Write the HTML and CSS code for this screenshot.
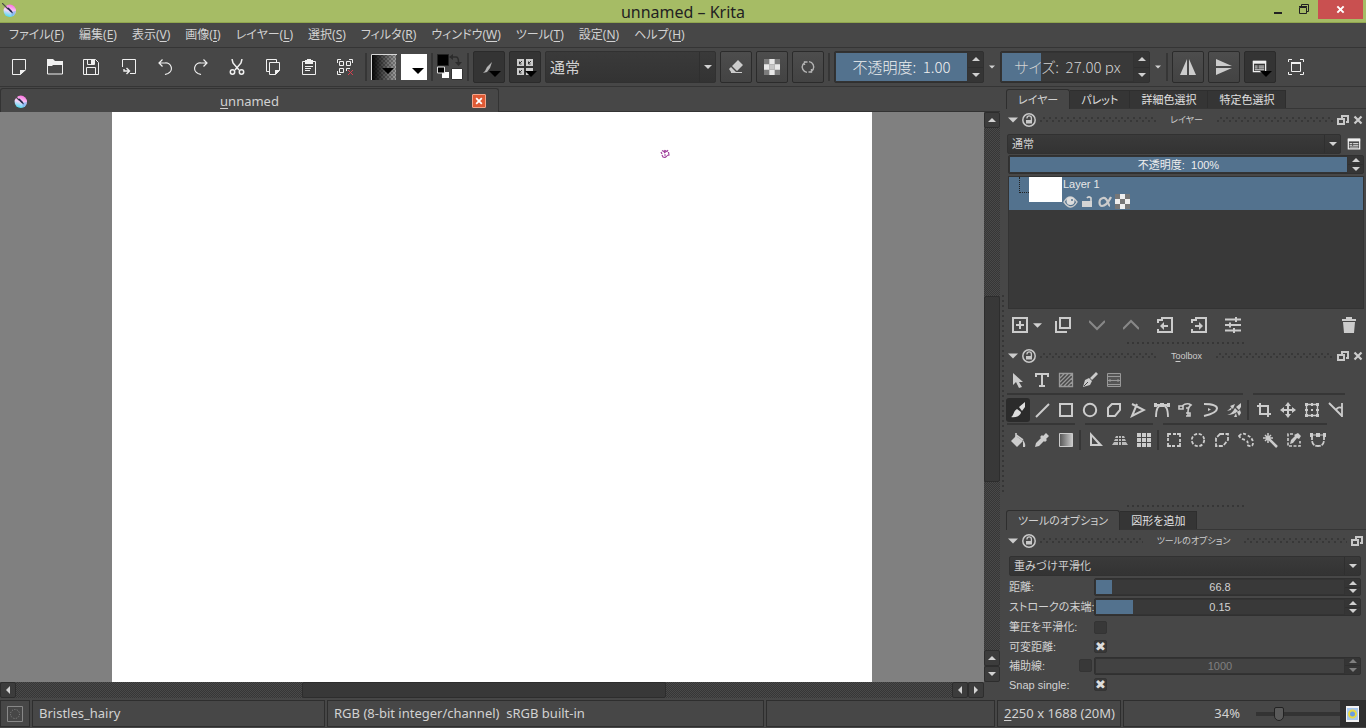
FILE: index.html
```html
<!DOCTYPE html>
<html lang="ja">
<head>
<meta charset="utf-8">
<title>unnamed – Krita</title>
<link rel="stylesheet" href="styles.css">
</head>
<body>
<svg class="defs" aria-hidden="true">
  <defs>
    <linearGradient id="kg" x1="0.6" y1="0" x2="0.3" y2="1"><stop offset="0" stop-color="#ff70e0"/><stop offset="0.5" stop-color="#f4d8fa"/><stop offset="1" stop-color="#40dcf0"/></linearGradient>
    <linearGradient id="gg"><stop offset="0" stop-color="#555"/><stop offset="1" stop-color="#ccc"/></linearGradient>
    <symbol id="krita" viewBox="0 0 14 14"><circle cx="7.800" cy="7.800" r="6.200" fill="url(#kg)"/><path d="M13.800 8a6 6 0 0 1-4 5.500L9 9z" fill="#6aa8f0" opacity=".6"/><path d="M0 0l6 6" stroke="#4a4a4a" stroke-width="1.200"/><path d="M5 5.500l3.500 3.500 2.500 1.500-1-2.500-3.500-3.500z" fill="#222a4a"/></symbol>
    <symbol id="up" viewBox="0 0 8 8"><path d="M0 6l4-4 4 4z" fill="currentColor"/></symbol>
    <symbol id="down" viewBox="0 0 8 8"><path d="M0 2l4 4 4-4z" fill="currentColor"/></symbol>
    <symbol id="left" viewBox="0 0 8 8"><path d="M6 0L2 4l4 4z" fill="currentColor"/></symbol>
    <symbol id="right" viewBox="0 0 8 8"><path d="M2 0l4 4-4 4z" fill="currentColor"/></symbol>
    <symbol id="lock" viewBox="0 0 14 14"><g fill="none" stroke="#c8c8c8"><circle cx="7" cy="7" r="6.200" stroke-width="1.500"/><path d="M5 5.500V5a2.200 2.200 0 0 1 4.400 0v3" stroke-width="1.300"/></g><path d="M4 7h6v3.500H4z" fill="#c8c8c8"/></symbol>
    <symbol id="float" viewBox="0 0 12 12"><g fill="none" stroke="#c8c8c8" stroke-width="2"><path d="M5 4V2h6v6H9"/><rect x="1" y="5" width="6" height="5"/></g></symbol>
    <symbol id="cross" viewBox="0 0 10 10"><path d="M1.500 1.500l7 7m0-7l-7 7" stroke="currentColor" stroke-width="2.200" fill="none"/></symbol>
    <symbol id="form" viewBox="0 0 16 16"><path d="M1.500 2.500h13v11h-13z" fill="none" stroke="#f0f0f0" stroke-width="1.400"/><path d="M1 2h14v3H1z" fill="#f0f0f0"/><path d="M3 7.500h3m1 0h6M3 9.500h3m1 0h6M3 11.500h10" stroke="#f0f0f0"/></symbol>
    <symbol id="checker" viewBox="0 0 15 15"><path d="M0 0h15v15H0z" fill="#7c7c7c"/><path d="M5 0h5v5H5zM0 5h5v5H0zM10 5h5v5h-5zM5 10h5v5H5z" fill="#e8e8e8"/><path d="M5 5h5v5H5z" fill="#c6c6c6"/></symbol>
    <symbol id="checkers" viewBox="0 0 15 15"><path d="M0 0h15v15H0z" fill="#777"/><path d="M5 0h5v5H5zM0 5h5v5H0zM10 5h5v5h-5zM5 10h5v5H5z" fill="#eee"/></symbol>
  </defs>
</svg>

<header class="titlebar">
  <svg class="app-icon" width="14" height="14"><use href="#krita"/></svg>
  <h1 class="title">unnamed – Krita</h1>
  <div class="win-buttons">
    <button class="win" aria-label="最小化"><svg width="18" height="18"><path d="M4 11h8v2H4z" fill="#222"/></svg></button>
    <button class="win" aria-label="元に戻す"><svg width="18" height="18"><path d="M3.500 6.500h7v6h-7zM3 5.500h8M5.500 5V3.500h7v7H11" fill="none" stroke="#222"/></svg></button>
    <button class="win win-close" aria-label="閉じる"><svg width="9" height="9"><use href="#cross"/></svg></button>
  </div>
</header>

<nav class="menubar">
  <button>ファイル(<u>F</u>)</button><button>編集(<u>E</u>)</button><button>表示(<u>V</u>)</button><button>画像(<u>I</u>)</button><button>レイヤー(<u>L</u>)</button><button>選択(<u>S</u>)</button><button>フィルタ(<u>R</u>)</button><button>ウィンドウ(<u>W</u>)</button><button>ツール(<u>T</u>)</button><button>設定(<u>N</u>)</button><button>ヘルプ(<u>H</u>)</button>
</nav>

<div class="toolbar">
  <div class="file-tools">
    <button aria-label="新規"><svg width="16" height="16" viewBox="0 0 16 16"><path d="M1.500.500h13v10l-5 5h-8z" fill="none" stroke="#f0f0f0"/><path d="M9 16v-5h6z" fill="#f0f0f0"/></svg></button>
    <button aria-label="開く"><svg width="16" height="16" viewBox="0 0 16 16"><path d="M.500 1v14h15V3.500" fill="none" stroke="#f0f0f0"/><path d="M0 0h6l2 2h8v4H6L5 7H0z" fill="#f0f0f0"/></svg></button>
    <button aria-label="保存"><svg width="16" height="16" viewBox="0 0 16 16"><path d="M.500.500h12l3 3v12H.500zM3.500 15V8.500h9V15M4.500 1v4.500h7V1" fill="none" stroke="#f0f0f0"/><path d="M8 1h3v4H8z" fill="#f0f0f0"/></svg></button>
    <button class="second" aria-label="書き出し"><svg width="16" height="16" viewBox="0 0 16 16"><path d="M1.500 8V.500h13v14H9" fill="none" stroke="#f0f0f0"/><path d="M3 10v2h5M5.500 9l3 3-3 3" fill="none" stroke="#f0f0f0" stroke-width="1.400"/></svg></button>
    <button aria-label="元に戻す"><svg width="16" height="16" viewBox="0 0 16 16"><path d="M2 4h6a5.500 5.500 0 0 1 3 10.500L8 15.500M5.500.500L2 4l3.500 3.500" fill="none" stroke="#f0f0f0" stroke-width="1.200"/></svg></button>
    <button aria-label="やり直し"><svg width="16" height="16" viewBox="0 0 16 16"><path d="M14 4H8a5.500 5.500 0 0 0-3 10.500l3 1M10.500.500L14 4l-3.500 3.500" fill="none" stroke="#f0f0f0" stroke-width="1.200"/></svg></button>
    <button aria-label="切り取り"><svg width="16" height="16" viewBox="0 0 16 16"><g fill="none" stroke="#f0f0f0" stroke-width="1.500"><path d="M3 0l1 4 6 7M13 0l-1 4-6 7"/><circle cx="3.500" cy="13" r="2.200"/><circle cx="12.500" cy="13" r="2.200"/></g></svg></button>
    <button aria-label="コピー"><svg width="16" height="16" viewBox="0 0 16 16"><path d="M4 12.500H1.500V.500h10V3M4.500 3.500h10v8l-4 4h-6z" fill="none" stroke="#f0f0f0"/><path d="M10 16v-5h5z" fill="#f0f0f0"/></svg></button>
    <button aria-label="貼り付け"><svg width="16" height="16" viewBox="0 0 16 16"><path d="M1.500 2.500h13v13h-13zM4 7.500h8M4 9.500h6M4 11.500h5" fill="none" stroke="#f0f0f0"/><path d="M4 1h2V0h4v1h2v4H4z" fill="#f0f0f0"/></svg></button>
    <button aria-label="選択解除"><svg width="16" height="16" viewBox="0 0 16 16"><path d="M.500 4V.500H4M12 .500h3.500V4M.500 12v3.500H4M2.500 2.500h4v4h-4zM9.500 2.500h4v4h-4zM2.500 9.500h4v4h-4zM9.500 12V9.500H13" fill="none" stroke="#f0f0f0"/><path d="M11 11l5 5m0-5l-5 5" stroke="#d84050"/></svg></button>
  </div>
  <i class="sep"></i>
  <button class="swatch" aria-label="グラデーション"><svg width="26" height="26"><defs><linearGradient id="sw"><stop offset="0"/><stop offset="1" stop-opacity="0"/></linearGradient><pattern id="chk" width="4" height="4" patternUnits="userSpaceOnUse"><path d="M0 0h4v4H0z" fill="#777"/><path d="M0 0h2v2H0zM2 2h2v2H2z" fill="#a0a0a0"/></pattern></defs><path d="M0 0h25v26H0z" fill="url(#chk)"/><path d="M0 0h25v26H0z" fill="url(#sw)"/><path d="M.500 26V.500H26" fill="none" stroke="#d8d8d8"/><path d="M11 14h12l-6 6z"/></svg></button>
  <button class="swatch" aria-label="パターン"><svg width="26" height="26"><path d="M0 0h26v26H0z" fill="#fff"/><path d="M11 14h12l-6 6z"/></svg></button>
  <i class="sep"></i>
  <button class="swatch" aria-label="描画色と背景色"><svg width="26" height="26"><path d="M.500.500h11v11h-11z" stroke="#222"/><path d="M5 18h7v6H5z" fill="#fff"/><path d="M.500 13h7v6h-7z" stroke="#ddd"/><path d="M14.500 14.500h11v11h-11z" fill="#fff" stroke="#333"/><path d="M16 0l-4 3 4 3zM18 8h7l-3.500 4z" fill="#2c2c2c"/><path d="M15 3h4q2.500 0 2.500 5" fill="none" stroke="#2c2c2c" stroke-width="1.500"/></svg></button>
  <i class="sep"></i>
  <button class="tbtn sunk" aria-label="ブラシ設定"><svg width="32" height="32"><path d="M19 11l-5 5-2 4-2 2 4-1 3-4z" fill="#b4b4b4"/><path d="M16 20h12l-6 6z"/></svg></button>
  <button class="tbtn sunk" aria-label="ブラシプリセット"><svg width="32" height="32"><path d="M8 8h7v7H8zM17 8h7v7h-7zM8 17h7v7H8zM17 17h7v7h-7z" fill="#ccc"/><path d="M10.500 10.500v2.500h2M13 10l-2 2M19.500 10.500v2.500h2M22 10l-2 2M10.500 19.500V22h2M13 19l-2 2" stroke="#333" fill="none"/><path d="M16 20h12l-6 6z"/></svg></button>
  <div class="combo big"><select aria-label="合成モード"><option>通常</option></select><svg width="8" height="8"><use href="#down"/></svg></div>
  <button class="tbtn" aria-label="消しゴム"><svg width="16" height="16"><path d="M10 1l5 5-6 6-5-5zM3 8l5 5H3l-2-3z" fill="#ccc"/><path d="M3 13.500h11" stroke="#ccc"/></svg></button>
  <button class="tbtn" aria-label="アルファを保護"><svg width="16" height="16"><use href="#checker"/></svg></button>
  <button class="tbtn" aria-label="再読み込み"><svg width="16" height="16"><g fill="none" stroke="#b4b4b4" stroke-width="1.400"><path d="M9 2.600a5.500 5.500 0 0 1 4 8.200M7 13.400a5.500 5.500 0 0 1-4-8.200"/><path d="M7.500 3H4.500v3M8.500 13h3v-3M3 5.500l2.500-3M13 10.500l-2.500 3"/></g></svg></button>
  <i class="sep"></i>
  <div class="spin big"><input type="text" class="opacity" aria-label="不透明度" value="不透明度:  1.00"><div class="steps"><button aria-label="増やす"><svg width="8" height="8"><use href="#up"/></svg></button><button aria-label="減らす"><svg width="8" height="8"><use href="#down"/></svg></button></div></div>
  <button class="more" aria-label="その他"><svg width="6" height="6"><use href="#down"/></svg></button>
  <div class="spin big"><input type="text" class="size" aria-label="サイズ" value="サイズ:  27.00 px"><div class="steps"><button aria-label="増やす"><svg width="8" height="8"><use href="#up"/></svg></button><button aria-label="減らす"><svg width="8" height="8"><use href="#down"/></svg></button></div></div>
  <button class="more" aria-label="その他"><svg width="6" height="6"><use href="#down"/></svg></button>
  <i class="sep"></i>
  <button class="tbtn" aria-label="左右反転"><svg width="16" height="16"><path d="M7 0v16H0zM9 0v16h7z" fill="#ccc"/></svg></button>
  <button class="tbtn" aria-label="上下反転"><svg width="16" height="16"><path d="M0 7V0l16 7zM0 9v7l16-7z" fill="#ccc"/></svg></button>
  <button class="tbtn sunk" aria-label="ワークスペース"><svg width="32" height="32"><use href="#form" x="8" y="8" width="15" height="15"/><path d="M16 20h12l-6 6z"/></svg></button>
  <button class="tbtn flat" aria-label="キャンバスのみ表示"><svg width="16" height="16"><path d="M.500 3V.500H4M12 .500h3.500V3M.500 13v2.500H4M12 15.500h3.500V13M3.500 3.500h9v9h-9z" fill="none" stroke="#f0f0f0"/><path d="M3 3h10v2H3z" fill="#f0f0f0"/></svg></button>
</div>

<main class="workspace">
  <section class="document">
    <div class="doc-tabs"><div class="doc-tab"><svg width="14" height="14"><use href="#krita"/></svg><span><u>u</u>nnamed</span><button class="tab-close" aria-label="閉じる"><svg width="8" height="8"><use href="#cross"/></svg></button></div></div>
    <div class="view">
      <div class="canvas"><div class="paper"><svg class="stroke" width="10" height="9"><path d="M1 3l1 2M2 1.500l2 1 1-1 2 1 1-1.500M8.500 3l.500 3-2 .500M2 6l1 2 2 .500 2-1.500M4 4l2-1.500M4 6h2" fill="none" stroke="#a0409c" stroke-width="1.200"/></svg></div></div>
      <div class="vscroll"><button aria-label="上へ"><svg width="8" height="8"><use href="#up"/></svg></button><div class="trough"><i class="thumb"></i></div><button aria-label="上へ"><svg width="8" height="8"><use href="#up"/></svg></button><button aria-label="下へ"><svg width="8" height="8"><use href="#down"/></svg></button></div>
    </div>
    <div class="hscroll"><button aria-label="左へ"><svg width="8" height="8"><use href="#left"/></svg></button><div class="trough"><i class="thumb"></i></div><button aria-label="左へ"><svg width="8" height="8"><use href="#left"/></svg></button><button aria-label="右へ"><svg width="8" height="8"><use href="#right"/></svg></button></div>
  </section>
  <div class="splitter"></div>
  <aside class="docks">
    <section class="dock layers">
      <div class="tabs"><button class="tab active">レイヤー</button><button class="tab">パレット</button><button class="tab">詳細色選択</button><button class="tab">特定色選択</button></div>
      <div class="dock-title"><button aria-label="折りたたむ"><svg width="10" height="10"><use href="#down"/></svg></button><button aria-label="ロック"><svg width="14" height="14"><use href="#lock"/></svg></button><i class="dots"></i><h2>レイヤー</h2><i class="dots"></i><button aria-label="切り離す"><svg width="12" height="12"><use href="#float"/></svg></button><button aria-label="閉じる"><svg width="10" height="10"><use href="#cross"/></svg></button></div>
      <div class="blend-row"><div class="combo"><select aria-label="合成モード"><option>通常</option></select><svg width="8" height="8"><use href="#down"/></svg></div><button aria-label="表示設定"><svg width="14" height="14"><use href="#form"/></svg></button></div>
      <div class="spin layer-opacity"><input type="text" aria-label="レイヤーの不透明度" value="不透明度:  100%"><div class="steps"><button aria-label="増やす"><svg width="8" height="8"><use href="#up"/></svg></button><button aria-label="減らす"><svg width="8" height="8"><use href="#down"/></svg></button></div></div>
      <div class="layer-list">
        <div class="layer"><i class="branch"></i><i class="thumbnail"></i><div class="layer-info"><span>Layer 1</span>
          <div class="layer-icons"><svg width="15" height="15"><path d="M1 8q6-10 13 0-6 10-13 0z" fill="none" stroke="#ccc" stroke-width="1.400"/><circle cx="7.500" cy="7" r="4" fill="#ddd"/><circle cx="9" cy="6" r="1" fill="#53728e"/></svg><svg width="15" height="15"><path d="M2 7h10v6H2z" fill="#d4d4d4"/><path d="M7 4a2.300 2.300 0 0 1 4 0v4" fill="none" stroke="#d4d4d4" stroke-width="1.600"/></svg><svg width="16" height="15"><path d="M14 3C11 9 8 12 5 12S1 5 6 4s5 8 7 8" fill="none" stroke="#ccc" stroke-width="2.200"/></svg><svg width="15" height="15"><use href="#checkers"/></svg></div></div></div>
      </div>
      <div class="layer-actions">
        <button aria-label="追加"><svg width="16" height="16"><path d="M1 1h14v14H1zM8 4v8M4 8h8" fill="none" stroke="#ccc" stroke-width="2"/></svg></button>
        <button class="narrow" aria-label="追加メニュー"><svg width="9" height="9"><use href="#down"/></svg></button>
        <button aria-label="複製"><svg width="16" height="16"><path d="M5 1h10v10H5zM1 4v11h11" fill="none" stroke="#ccc" stroke-width="2"/></svg></button>
        <button aria-label="下へ"><svg width="16" height="16"><path d="M0 4l8 8 8-8" fill="none" stroke="#888" stroke-width="2"/></svg></button>
        <button aria-label="上へ"><svg width="16" height="16"><path d="M0 12l8-8 8 8" fill="none" stroke="#888" stroke-width="2"/></svg></button>
        <button aria-label="グループから出す"><svg width="16" height="16"><path d="M1 6V3h4V1h10v14H1v-3" fill="none" stroke="#ccc" stroke-width="2"/><path d="M11 9H5" stroke="#ccc" stroke-width="2"/><path d="M7 5v8L3 9z" fill="#ccc"/></svg></button>
        <button aria-label="グループに入れる"><svg width="16" height="16"><path d="M1 6V3h4V1h10v14H1v-3" fill="none" stroke="#ccc" stroke-width="2"/><path d="M4 9h5" stroke="#ccc" stroke-width="2"/><path d="M8 5v8l4-4z" fill="#ccc"/></svg></button>
        <button aria-label="プロパティ"><svg width="16" height="16"><path d="M0 2.500h16M0 8h16M0 13.500h16M11 0v5M5 5.500v5M9 11v5" fill="none" stroke="#ccc" stroke-width="2"/></svg></button>
        <button class="trash" aria-label="削除"><svg width="16" height="16"><path d="M1 2h4V0h6v2h4v2H1zM2 5h12l-1 11H3z" fill="#ccc"/></svg></button>
      </div>
    </section>
    <div class="handle"></div>
    <section class="dock toolbox">
      <div class="dock-title"><button aria-label="折りたたむ"><svg width="10" height="10"><use href="#down"/></svg></button><button aria-label="ロック"><svg width="14" height="14"><use href="#lock"/></svg></button><i class="dots"></i><h2>T<u>o</u>olbox</h2><i class="dots"></i><button aria-label="切り離す"><svg width="12" height="12"><use href="#float"/></svg></button><button aria-label="閉じる"><svg width="10" height="10"><use href="#cross"/></svg></button></div>
      <div class="tool-row">
        <div class="group plain">
          <button aria-label="図形選択"><svg viewBox="0 0 16 16"><path d="M3 1v12l3-3 3 6 3-1-3-5h4z" fill="#ccc"/></svg></button>
          <button aria-label="テキスト"><svg viewBox="0 0 16 16"><path d="M2 5V2h12v3M8 2v12M5 14h6" fill="none" stroke="#ccc" stroke-width="2"/></svg></button>
          <button aria-label="パターン編集"><svg viewBox="0 0 16 16"><path d="M1.500 1.500h13v13h-13zM2 6l4-4M2 10l8-8M2 14L14 2M6 14l8-8M10 14l4-4" fill="none" stroke="#999" stroke-width="1.300"/></svg></button>
          <button aria-label="カリグラフィ"><svg viewBox="0 0 16 16"><path d="M16 2l-2-2-6 6 2 2zM7 6L3 8 1 15l7-2 2-4z" fill="#ccc"/><path d="M2 14l4-4" stroke="#474747"/></svg></button>
          <button aria-label="グラデーション編集"><svg viewBox="0 0 16 16"><path d="M1.500 1.500h13v13h-13z" fill="#555" stroke="#999"/><path d="M2 4.500h12M2 12.500h12M2 8.500h12M4 7v3M12 7v3" fill="none" stroke="#999"/></svg></button>
        </div>
      </div>
      <div class="tool-row">
        <div class="group">
          <button class="selected" aria-label="ブラシ"><svg viewBox="0 0 16 16"><path d="M15 0l-6 5 3 4 3-4zM7 7l4 3c0 4-6 6-10 5 3-1 2-6 6-8z" fill="#ddd"/></svg></button>
          <button aria-label="直線"><svg viewBox="0 0 16 16"><path d="M2 15L15 2" stroke="#ccc" stroke-width="2"/></svg></button>
          <button aria-label="長方形"><svg viewBox="0 0 16 16"><path d="M2 2h12v12H2z" fill="none" stroke="#ccc" stroke-width="2"/></svg></button>
          <button aria-label="楕円"><svg viewBox="0 0 16 16"><circle cx="8" cy="8" r="6.200" fill="none" stroke="#ccc" stroke-width="2"/></svg></button>
          <button aria-label="多角形"><svg viewBox="0 0 16 16"><path d="M6 2h8v6l-5 6H2V6z" fill="none" stroke="#ccc" stroke-width="2"/></svg></button>
          <button aria-label="折れ線"><svg viewBox="0 0 16 16"><path d="M2 2l12 6-12 6 5-12" fill="none" stroke="#ccc" stroke-width="2"/></svg></button>
          <button aria-label="ベジェ曲線"><svg viewBox="0 0 16 16"><path d="M2 15q0-12 6-12t6 12M1 3h14" fill="none" stroke="#ccc" stroke-width="1.800"/><path d="M0 1h3v4H0zM6 1h4v4H6zM13 1h3v4h-3z" fill="#ccc"/></svg></button>
          <button aria-label="フリーハンドパス"><svg viewBox="0 0 16 16"><path d="M1 4h4v3H1zM4 4q5-4 9-1-3 2-3 7v4M8 6h3M8 11h4v3H8" fill="none" stroke="#ccc" stroke-width="1.600"/></svg></button>
          <button aria-label="ダイナミックブラシ"><svg viewBox="0 0 16 16"><path d="M2 2q13 0 13 4.500T2 14" fill="none" stroke="#ccc" stroke-width="2"/><path d="M6 6l3 1.500L6 9z" fill="#ccc"/></svg></button>
          <button aria-label="マルチブラシ"><svg viewBox="0 0 16 16"><path d="M15 1l-5 4 3 3 2-3zM9 6l3 3q-4 4-11 4 5-1 8-7zM9 2L4 4l3 3zM6 5L1 9l4-1zM14 8l-3 2 2 4 2-3zM10 11l-2 4h3z" fill="#ccc"/></svg></button>
        </div>
        <i class="tsep"></i>
        <div class="group">
          <button aria-label="切り抜き"><svg viewBox="0 0 16 16"><path d="M4 1v11h11M1 4h11v11" fill="none" stroke="#ccc" stroke-width="2"/></svg></button>
          <button aria-label="移動"><svg viewBox="0 0 16 16"><path d="M8 2v12M2 8h12" stroke="#ccc" stroke-width="2"/><path d="M8 0l3 4H5zM8 16l3-4H5zM0 8l4-3v6zM16 8l-4-3v6z" fill="#ccc"/></svg></button>
          <button aria-label="変形"><svg viewBox="0 0 16 16"><path d="M2.500 2.500h11v11h-11z" fill="none" stroke="#ccc" stroke-width="1.400"/><path d="M1 1h3v3H1zM12 1h3v3h-3zM1 12h3v3H1zM12 12h3v3h-3zM7 7h2v2H7zM7 1h2v3H7zM7 12h2v3H7zM1 7h3v2H1zM12 7h3v2h-3z" fill="#ccc"/></svg></button>
          <button aria-label="計測"><svg viewBox="0 0 16 16"><path d="M1 1l13 13M14 1v14M8 8q2-4 6-2" fill="none" stroke="#ccc" stroke-width="1.800"/></svg></button>
        </div>
      </div>
      <div class="tool-row">
        <div class="group">
          <button aria-label="塗りつぶし"><svg viewBox="0 0 16 16"><path d="M6 4l7 5-6 6-6-6z" fill="#ccc"/><path d="M6 1v7M6 3l7 5" fill="none" stroke="#ccc" stroke-width="1.600"/><path d="M13 8q3 4 2 7h-2z" fill="#ccc"/></svg></button>
          <button aria-label="色の選択"><svg viewBox="0 0 16 16"><path d="M12 1l3 3-3 3 1 1-2 2-5-5 2-2 1 1zM7 6l3 3-5 5-4 1 1-4z" fill="#ccc"/></svg></button>
          <button aria-label="グラデーション"><svg viewBox="0 0 16 16"><path d="M1.500 1.500h13v13h-13z" fill="url(#gg)" stroke="#ccc"/></svg></button>
        </div>
        <i class="tsep"></i>
        <div class="group">
          <button aria-label="定規"><svg viewBox="0 0 16 16"><path d="M2 0l13 14H2zM4 5v7h6z" fill="#ccc" fill-rule="evenodd"/></svg></button>
          <button aria-label="遠近グリッド"><svg viewBox="0 0 16 16"><path d="M4 4h2v2H3zM7 4h2v2H7zM10 4h2l1 2h-3zM3 7h3v2H2zM7 7h2v2H7zM10 7h3l1 2h-4zM2 10h4v3H0zM7 10h2v3H7zM10 10h4l2 3h-6z" fill="#bbb"/></svg></button>
          <button aria-label="グリッド"><svg viewBox="0 0 16 16"><path d="M1 1h4v4H1zM6 1h4v4H6zM11 1h4v4h-4zM1 6h4v4H1zM6 6h4v4H6zM11 6h4v4h-4zM1 11h4v4H1zM6 11h4v4H6zM11 11h4v4h-4z" fill="#ccc"/></svg></button>
        </div>
        <i class="tsep"></i>
        <div class="group">
          <button aria-label="矩形選択"><svg viewBox="0 0 16 16"><path d="M2 5V2h3M7 2h3M11 2h3v3M14 7v3M14 11v3h-3M9 14H6M5 14H2v-3M2 9V6" fill="none" stroke="#ccc" stroke-width="1.800"/></svg></button>
          <button aria-label="楕円選択"><svg viewBox="0 0 16 16"><circle cx="8" cy="8" r="6.200" fill="none" stroke="#ccc" stroke-width="1.800" stroke-dasharray="3.200 1.670"/></svg></button>
          <button aria-label="多角形選択"><svg viewBox="0 0 16 16"><path d="M6 2h8v6l-5 6H2V6z" fill="none" stroke="#ccc" stroke-width="1.800" stroke-dasharray="4 1.500"/></svg></button>
          <button aria-label="自由選択"><svg viewBox="0 0 16 16"><path d="M1 4q3-4 8-1 6 3 6 8t-6 2q2-4-2-5T1 4z" fill="none" stroke="#ccc" stroke-width="1.800" stroke-dasharray="3 1.800"/></svg></button>
          <button aria-label="連続選択"><svg viewBox="0 0 16 16"><path d="M6 6l9 9" stroke="#ccc" stroke-width="2.500"/><path d="M6 1v10M1 6h10M3 3l6 6M9 3L3 9" stroke="#ccc" stroke-width="1.500"/></svg></button>
          <button aria-label="類似色選択"><svg viewBox="0 0 16 16"><path d="M7 2H2v12h12V9" fill="none" stroke="#ccc" stroke-width="1.600" stroke-dasharray="3 1.500"/><path d="M12 1l3 3-2 3-2-1-4 5-3 1 1-4 4-4-1-1z" fill="#ccc"/></svg></button>
          <button aria-label="ベジェ選択"><svg viewBox="0 0 16 16"><path d="M2 3v5q0 6 6 6t6-6V3" fill="none" stroke="#ccc" stroke-width="1.800" stroke-dasharray="5 1"/><path d="M1 3h14" stroke="#ccc"/><path d="M0 1h3v4H0zM6 1h4v4H6zM13 1h3v4h-3z" fill="#ccc"/></svg></button>
        </div>
      </div>
    </section>
    <div class="handle"></div>
    <section class="dock options">
      <div class="tabs"><button class="tab active">ツールのオプション</button><button class="tab">図形を追加</button></div>
      <div class="dock-title"><button aria-label="折りたたむ"><svg width="10" height="10"><use href="#down"/></svg></button><button aria-label="ロック"><svg width="14" height="14"><use href="#lock"/></svg></button><i class="dots"></i><h2>ツールのオプション</h2><i class="dots"></i><button aria-label="切り離す"><svg width="12" height="12"><use href="#float"/></svg></button></div>
      <form class="form">
        <div class="combo wide"><select aria-label="平滑化の種類"><option>重みづけ平滑化</option></select><svg width="8" height="8"><use href="#down"/></svg></div>
        <label for="dist">距離:</label>
        <div class="spin"><input id="dist" class="f5" type="text" value="66.8"><div class="steps"><button type="button" aria-label="増やす"><svg width="8" height="8"><use href="#up"/></svg></button><button type="button" aria-label="減らす"><svg width="8" height="8"><use href="#down"/></svg></button></div></div>
        <label for="end">ストロークの末端:</label>
        <div class="spin"><input id="end" class="f15" type="text" value="0.15"><div class="steps"><button type="button" aria-label="増やす"><svg width="8" height="8"><use href="#up"/></svg></button><button type="button" aria-label="減らす"><svg width="8" height="8"><use href="#down"/></svg></button></div></div>
        <label for="press">筆圧を平滑化:</label><input id="press" type="checkbox">
        <label for="scal">可変距離:</label><input id="scal" type="checkbox" checked>
        <div class="assist"><label for="assist">補助線:</label><input id="assist" type="checkbox"></div>
        <div class="spin off"><input type="text" value="1000" disabled aria-label="補助線の強度"><div class="steps"><button type="button" disabled aria-label="増やす"><svg width="8" height="8"><use href="#up"/></svg></button><button type="button" disabled aria-label="減らす"><svg width="8" height="8"><use href="#down"/></svg></button></div></div>
        <label for="snap">Snap single:</label><input id="snap" type="checkbox" checked>
      </form>
    </section>
  </aside>
</main>

<footer class="status">
  <button class="cell sel" aria-label="選択表示"><svg width="16" height="16"><path d="M.500.500h15v15H.500z" fill="none" stroke="#888"/><circle cx="8" cy="8" r="4.500" fill="none" stroke="#888" stroke-dasharray="1 1.500"/></svg></button>
  <div class="cell brush">Bristles_hairy</div>
  <div class="cell profile">RGB (8-bit integer/channel)&nbsp; sRGB built-in</div>
  <div class="cell blank"></div>
  <div class="cell dims"><u>2</u>250 x 1688 (20M)</div>
  <div class="cell zoom"><output>34%</output><input type="range" min="0" max="100" value="24" aria-label="ズーム"><button aria-label="表示倍率"><svg width="13" height="16"><path d="M0 0h13v16H0z" fill="#f4f4f4"/><path d="M1 2h11v12H1z" fill="#a8c8f0"/><circle cx="6.500" cy="8" r="3.500" fill="#6a9ce0" stroke="#e8d840" stroke-width="2"/></svg></button></div>
</footer>
</body>
</html>
```
FILE: styles.css
```css
* { box-sizing: border-box; }
body {
  margin: 0; height: 100vh; overflow: hidden;
  display: flex; flex-direction: column;
  background: #474747; color: #d2d2d2;
  font: 13px/16px "Noto Sans", "Noto Sans CJK JP", sans-serif;
}
button {
  margin: 0; padding: 0; border: 0; background: none;
  color: inherit; font: inherit;
  display: flex; align-items: center; justify-content: center;
}
input, select { margin: 0; font: inherit; color: inherit; }
svg { display: block; flex: none; }
h1, h2 { margin: 0; font-weight: normal; }
i { font-style: normal; }
u { text-underline-offset: 2px; }
.defs { position: absolute; width: 0; height: 0; }

.titlebar {
  height: 23px; flex: none; display: grid; grid-template-columns: 1fr auto 1fr;
  background: #a6bc65; border-bottom: 1px solid #91a64f; color: #222;
}
.app-icon { margin: 3px 2px; }
.title { font-size: 16px; line-height: 24px; }
.win-buttons { display: flex; justify-content: flex-end; padding-right: 3px; }
.win { width: 26px; height: 19px; }
.win-close { width: 45px; background: #c95050; color: #fff; }

.menubar {
  height: 24px; flex: none; display: flex; gap: 15px; padding: 0 9px;
  font-size: 12px; font-feature-settings: "palt"; white-space: nowrap;
}
.toolbar {
  height: 40px; flex: none; display: flex; align-items: center; gap: 4px;
  padding: 0 1px; border-top: 1px solid #353535; border-bottom: 1px solid #353535;
}
.file-tools { display: flex; margin-right: -2px; }
.file-tools button { width: 36px; height: 32px; }
.file-tools .second { margin-left: 2px; }
.sep { width: 2px; height: 28px; background: #363636; flex: none; }
.swatch { width: 26px; height: 26px; flex: none; }
.tbtn {
  width: 32px; height: 32px; flex: none; border: 1px solid #2b2b2b; border-radius: 2px;
  background: linear-gradient(#4d4d4d, #434343);
}
.sunk { background: #343434; }
.flat { background: none; border-color: transparent; }
.more { width: 8px; height: 32px; flex: none; }

.combo {
  position: relative; flex: 1; min-width: 0; height: 20px;
  border: 1px solid #313131; border-radius: 2px;
  background: linear-gradient(#3a3a3a, #333);
  font-size: 11px;
}
.combo select {
  appearance: none; width: 100%; height: 100%; padding: 0 4px;
  border: 0; background: none; outline: 0;
}
.combo svg { position: absolute; right: 3px; top: calc(50% - 4px); pointer-events: none; }
.combo::after { content: ""; position: absolute; right: 15px; top: 0; bottom: 0; border-left: 1px solid #2f2f2f; }
.combo.big { flex: 0 1 171px; height: 32px; font-size: 15px; }

.spin { display: flex; min-width: 0; height: 19px; border: 1px solid #303030; border-radius: 2px; background: #353535; }
.spin input {
  flex: 1; min-width: 0; width: 0; padding: 0; border: 1px solid #333; text-align: center; white-space: pre;
  background: #393939; font-family: "Liberation Sans", "Noto Sans CJK JP", sans-serif; font-size: 11px;
}
.steps { width: 15px; display: flex; flex-direction: column; color: #d0d0d0; }
.steps button { flex: 1; min-height: 0; }
.steps button + button { border-top: 1px solid #2f2f2f; }
.spin.big { width: 150px; height: 32px; flex: none; }
.spin.big input { font-family: "Noto Sans CJK JP", sans-serif; font-weight: 300; font-size: 15px; }
.spin .opacity { background: #53728e; color: #f0f0f0; }
.spin .size { background: linear-gradient(90deg, #53728e 30%, #393939 30%); font-feature-settings: "palt"; }
.spin .f5 { background: linear-gradient(90deg, #53728e 16px, #393939 16px); }
.spin .f15 { background: linear-gradient(90deg, #53728e 15%, #393939 15%); }
.spin.off, .spin.off .steps { color: #808080; }
.spin.off input { background: #424242; }

.workspace { flex: 1; min-height: 0; display: flex; }
.document { flex: 1; min-width: 0; display: flex; flex-direction: column; }
.doc-tabs { height: 25px; flex: none; border-bottom: 1px solid #333; padding-top: 1px; }
.doc-tab {
  width: 499px; height: 24px; display: flex; align-items: center; padding: 0 12px 0 12px;
  border: 1px solid #333; border-bottom: 0; border-radius: 3px 3px 0 0;
  background: #474747;
}
.doc-tab span { flex: 1; text-align: center; }
.tab-close { width: 14px; height: 14px; border: 1px solid #f4a58a; background: #de5a35; border-radius: 1px; color: #fff; }
.view { flex: 1; min-height: 0; display: flex; }
.canvas { flex: 1; display: flex; padding: 0 112px; background: #808080; }
.paper { flex: 1; position: relative; background: #fff; }
.stroke { position: absolute; left: 548px; top: 37px; }
.vscroll { width: 16px; display: flex; flex-direction: column; }
.vscroll button, .hscroll button {
  width: 16px; height: 16px; flex: none; border: 1px solid #2d2d2d; border-radius: 2px; background: #3c3c3c;
}
.hscroll { height: 16px; width: calc(100% - 16px); flex: none; display: flex; }
.trough {
  flex: 1; display: flex;
  background: conic-gradient(#363636 25%, #494949 0 50%, #363636 0 75%, #494949 0) 0 0 / 2px 2px;
}
.vscroll .trough { flex-direction: column; }
.thumb { border: 1px solid #2d2d2d; border-radius: 2px; background: #383838; }
.vscroll .thumb { margin-top: 168px; height: 186px; }
.hscroll .thumb { margin-left: 286px; width: 364px; }
.splitter {
  width: 6px; height: 200px; flex: none; align-self: center;
  background: radial-gradient(circle at 3px 3px, #363636 1px, transparent 1px) 0 0 / 6px 5px;
}

.docks { width: 360px; flex: none; display: flex; flex-direction: column; font-size: 11px; }
.dock { display: flex; flex-direction: column; }
.layers { flex: 1; min-height: 0; }
.tabs { height: 22px; flex: none; display: flex; align-items: flex-end; border-bottom: 1px solid #363636; font-feature-settings: "palt"; }
.tab {
  height: 18px; padding: 0 11px; border: 1px solid #2e2e2e; border-left-width: 0; border-bottom: 0;
  background: #353535; color: #e0e0e0; white-space: nowrap;
}
.tab.active { height: 20px; margin-bottom: -1px; border-left-width: 1px; border-radius: 3px 3px 0 0; background: #474747; color: #d2d2d2; }
.dock-title { height: 22px; flex: none; display: flex; align-items: center; gap: 4px; padding: 0 3px 0 2px; color: #ccc; }
.dock-title h2 {
  font: 9px/16px "Liberation Sans", "Noto Sans CJK JP", sans-serif; font-feature-settings: "palt"; padding: 0 10px;
}
.dots {
  flex: 1; height: 6px;
  background: radial-gradient(circle at 1px 4px, #383838 1px, transparent 1px) 0 0 / 6px 6px,
    radial-gradient(circle at 4px 1px, #383838 1px, transparent 1px) 0 0 / 6px 6px;
}
.blend-row { display: flex; gap: 6px; align-items: center; padding: 3px 5px 1px 1px; }
.layer-opacity { margin: 0 2px 2px 2px; }
.layer-opacity input { background: #53728e; color: #eee; }
.layer-list { flex: 1; min-height: 0; margin: 0 2px; border: 1px solid #333; background: #393939; }
.layer { display: flex; height: 33px; background: #53728e; color: #e8e8e8; }
.branch { width: 10px; height: 16px; margin-left: 10px; border-left: 1px dotted #222; border-bottom: 1px dotted #222; }
.thumbnail { width: 33px; height: 25px; background: #fff; }
.layer-info { padding-left: 1px; font-family: "Liberation Sans", sans-serif; line-height: 15px; }
.layer-icons { display: flex; gap: 2px; padding-top: 2px; }
.layer-actions { height: 32px; flex: none; display: flex; align-items: center; padding: 0 0 0 5px; }
.layer-actions button { width: 18px; height: 24px; margin-right: 16px; }
.layer-actions .narrow { width: 9px; margin: 0 12px 0 -12px; }
.layer-actions .trash { margin-left: auto; margin-right: 8px; }
.handle {
  width: 120px; height: 5px; flex: none; align-self: center;
  background: radial-gradient(circle at 2px 2px, #363636 1px, transparent 1px) 0 0 / 5px 5px;
}
.toolbox { height: 158px; flex: none; }
.toolbox .dock-title { height: 20px; }
.tool-row { display: flex; }
.group { height: 30px; display: flex; align-items: flex-start; background: linear-gradient(#363636, #363636) 1px 0 / calc(100% - 4px) 2px no-repeat; padding-top: 5px; }
.group.plain { height: 27px; background: none; padding-top: 2px; }
.group button { width: 24px; height: 24px; border-radius: 3px; }
.group svg { width: 16px; height: 16px; }
.group .selected { background: #2b2b2b; }
.tsep { width: 2px; height: 20px; margin: 7px 3px 0 1px; background: #363636; }

.options { flex: none; }
.options .tabs { height: 21px; }
.form {
  display: grid; grid-template-columns: 83px 1fr; align-items: center; column-gap: 2px;
  padding: 3px 5px 4px 3px; grid-template-rows: 22px repeat(3, 20px) repeat(3, 19px);
}
.form .wide { grid-column: 1 / -1; }
.form .spin { height: 18px; }
.form label { white-space: nowrap; font-family: "Liberation Sans", "Noto Sans CJK JP", sans-serif; font-feature-settings: "palt"; }
.form input[type="checkbox"] { appearance: none; width: 13px; height: 13px; background: #383838; border: 1px solid #343434; border-radius: 2px; }
.form input[type="checkbox"]:checked::before { content: "✖"; display: block; font: 13px/11px "DejaVu Sans", sans-serif; text-align: center; color: #ddd; }
.assist { display: flex; justify-content: space-between; align-items: center; }

.status { height: 30px; flex: none; display: flex; gap: 2px; padding: 2px 0 1px; }
.cell { border: 1px solid #2e2e2e; padding: 0 6px; line-height: 25px; white-space: nowrap; }
.sel { width: 30px; padding: 0; }
.brush { width: 293px; }
.profile { width: 437px; }
.blank { flex: 1; }
.dims { width: 124px; }
.zoom { width: 243px; display: flex; align-items: center; justify-content: flex-end; padding: 0; }
.zoom output { margin-right: 16px; }
.zoom input { appearance: none; width: 84px; height: 16px; background: linear-gradient(#333, #333) 0 50% / 100% 4px no-repeat; }
.zoom input::-webkit-slider-thumb {
  appearance: none; width: 10px; height: 14px; background: #5a5a5a; border: 1px solid #222; border-radius: 2px 2px 5px 5px;
}
.zoom button { width: 25px; height: 25px; background: #2f2f2f; }
```
